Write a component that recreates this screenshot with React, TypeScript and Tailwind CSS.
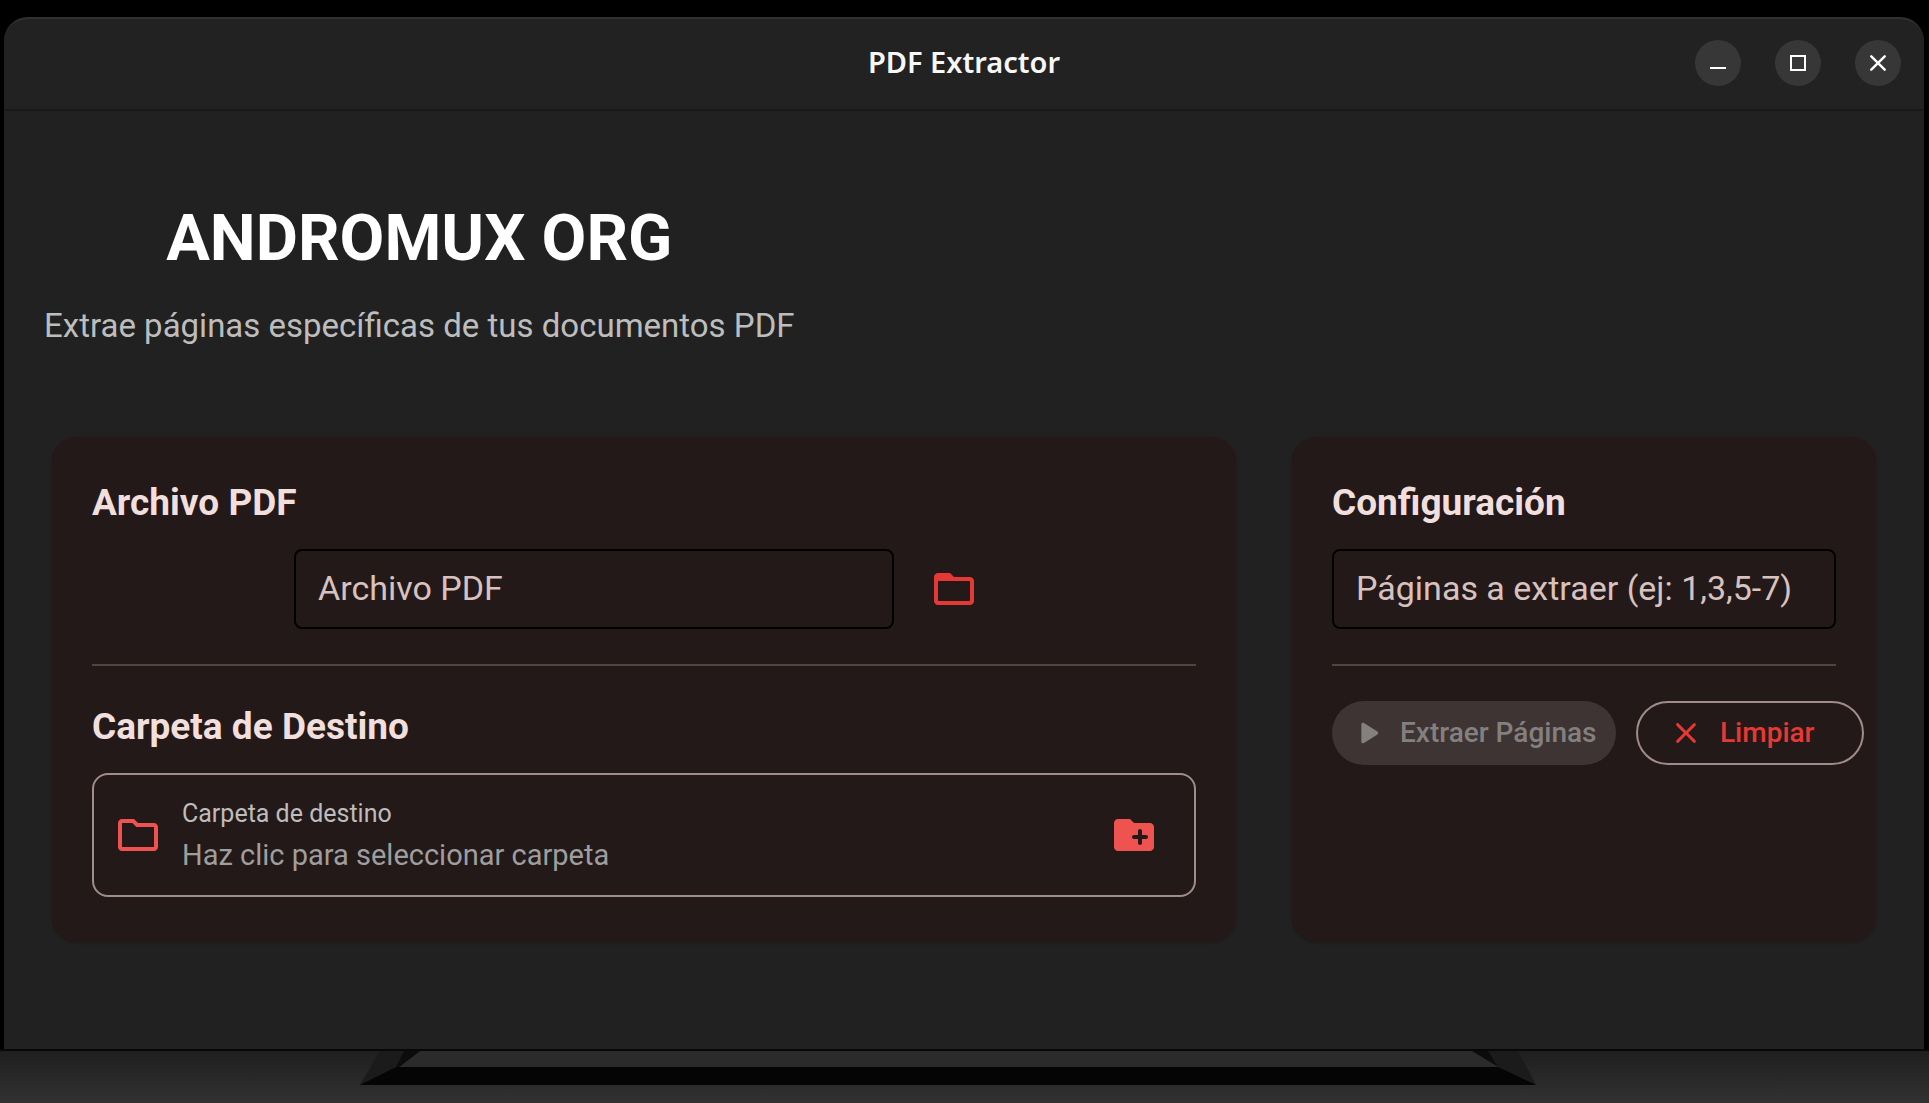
import React, { useState } from 'react';

const FOLDER_OPEN =
  'M20 6h-8l-2-2H4c-1.1 0-1.99.9-1.99 2L2 18c0 1.1.9 2 2 2h16c1.1 0 2-.9 2-2V8c0-1.1-.9-2-2-2zm-.5 12h-15c-.28 0-.5-.22-.5-.5v-9c0-.28.22-.5.5-.5h15c.28 0 .5.22.5.5v9c0 .28-.22.5-.5.5z';
const FOLDER_OUTLINED =
  'M9.17 6l2 2H20v10H4V6h5.17M10 4H4c-1.1 0-1.99.9-1.99 2L2 18c0 1.1.9 2 2 2h16c1.1 0 2-.9 2-2V8c0-1.1-.9-2-2-2h-8l-2-2z';
const NEW_FOLDER =
  'M20 6h-8l-2-2H4c-1.11 0-1.99.89-1.99 2L2 18c0 1.11.89 2 2 2h16c1.11 0 2-.89 2-2V8c0-1.11-.89-2-2-2zm-2 8h-2v2c0 .55-.45 1-1 1s-1-.45-1-1v-2h-2c-.55 0-1-.45-1-1s.45-1 1-1h2v-2c0-.55.45-1 1-1s1 .45 1 1v2h2c.55 0 1 .45 1 1s-.45 1-1 1z';
const PLAY =
  'M8 6.82v10.36c0 .79.87 1.27 1.54.84l8.14-5.18c.62-.39.62-1.29 0-1.69L9.54 5.98C8.87 5.55 8 6.03 8 6.82z';
const CLEAR =
  'M18.3 5.71c-.39-.39-1.02-.39-1.41 0L12 10.59 7.11 5.7c-.39-.39-1.02-.39-1.41 0-.39.39-.39 1.02 0 1.41L10.59 12 5.7 16.89c-.39.39-.39 1.02 0 1.41.39.39 1.02.39 1.41 0L12 13.41l4.89 4.89c.39.39 1.02.39 1.41 0 .39-.39.39-1.02 0-1.41L13.41 12l4.89-4.89c.38-.38.38-1.02 0-1.4z';

function Icon({ path, className }: { path: string; className: string }) {
  return (
    <svg viewBox="0 0 24 24" fill="currentColor" aria-hidden="true" className={`shrink-0 ${className}`}>
      <path d={path} />
    </svg>
  );
}

function WindowButton({ label, children }: { label: string; children: React.ReactNode }) {
  return (
    <button
      type="button"
      aria-label={label}
      className="flex size-[46px] items-center justify-center rounded-full bg-[#373737] text-white"
    >
      <svg viewBox="0 0 16 16" fill="none" stroke="currentColor" strokeWidth="2" className="size-4">
        {children}
      </svg>
    </button>
  );
}

function TitleBar() {
  return (
    <header className="grid h-[94px] grid-cols-[1fr_auto_1fr] items-center rounded-t-3xl border-t-2 border-b-2 border-t-[#313131] border-b-[#191919] bg-[#222222] px-[23px] pb-0.5">
      <span />
      <h1 className="pb-0.5 font-['Noto_Sans',sans-serif] text-[29px] leading-10 font-semibold text-[#f7f7f7]">
        PDF Extractor
      </h1>
      <div className="flex justify-end gap-[34px]">
        <WindowButton label="Minimizar">
          <path d="M0 13h16" />
        </WindowButton>
        <WindowButton label="Maximizar">
          <path d="M1 1h14v14H1z" />
        </WindowButton>
        <WindowButton label="Cerrar">
          <path d="M1.3 1.3l13.4 13.4M14.7 1.3L1.3 14.7" strokeWidth="2.4" strokeLinecap="round" />
        </WindowButton>
      </div>
    </header>
  );
}

function Card({ children }: { children: React.ReactNode }) {
  return (
    <section className="m-2 min-w-0 rounded-3xl bg-[#231918] px-10 pt-10 pb-[45px] shadow-sm">{children}</section>
  );
}

function CardTitle({ children }: { children: React.ReactNode }) {
  return <h3 className="text-[37px] leading-[52px] font-bold text-[#f1dfdd]">{children}</h3>;
}

function Divider() {
  return <hr className="my-[35px] border-t-2 border-[#534341]" />;
}

const inputClass =
  'h-20 min-w-0 rounded-lg border-2 border-black bg-transparent px-[22px] pb-0.5 text-[34px] text-[#f1dfdd] placeholder:text-[#d8c2bf] outline-none';

function Wallpaper() {
  return (
    <div className="h-[52px] overflow-hidden bg-linear-to-b from-[#1f1f1f] to-[#323232]">
      <svg viewBox="0 0 1929 52" preserveAspectRatio="none" className="h-full w-full" aria-hidden="true">
        <path d="M380 0h1138l18 34H360z" fill="#1b1b1b" />
        <path d="M404 0h1084l10 16H396z" fill="#0c0c0c" />
        <path d="M420 0h1052l28 17H398z" fill="#2b2b2b" />
        <path d="M396 16h1102l38 18H360z" fill="#050505" />
      </svg>
    </div>
  );
}

export default function App() {
  const [file, setFile] = useState('');
  const [pages, setPages] = useState('');

  return (
    <div className="flex min-h-screen flex-col bg-black pt-[17px] font-[Roboto,sans-serif]">
      <div className="mr-[5px] ml-1 flex grow flex-col">
        <TitleBar />
        <main className="grow bg-[#212121] px-10 pt-[82px] pb-20">
          <div className="flex w-fit flex-col items-center">
            <h2 className="text-[65px] leading-[90px] font-bold text-white">ANDROMUX ORG</h2>
            <p className="mt-[19px] text-[33px] leading-[48px] text-[#bdbdbd]">
              Extrae páginas específicas de tus documentos PDF
            </p>
          </div>

          <div className="mt-[79px] grid grid-cols-[2fr_1fr] gap-10">
            <Card>
              <CardTitle>Archivo PDF</CardTitle>
              <div className="mt-5 flex items-center justify-center gap-5">
                <input
                  type="text"
                  aria-label="Archivo PDF"
                  placeholder="Archivo PDF"
                  value={file}
                  onChange={(e) => setFile(e.target.value)}
                  className={`w-[600px] ${inputClass}`}
                />
                <button type="button" aria-label="Seleccionar archivo" className="p-4 text-[#e53935]">
                  <Icon path={FOLDER_OPEN} className="size-12" />
                </button>
              </div>
              <Divider />
              <CardTitle>Carpeta de Destino</CardTitle>
              <button
                type="button"
                className="mt-5 flex h-[124px] w-full items-center gap-5 rounded-2xl border-2 border-[#a08c8a] pr-9 pl-5 text-left"
              >
                <Icon path={FOLDER_OUTLINED} className="size-12 text-[#ef5350]" />
                <span className="flex grow flex-col pt-1">
                  <span className="text-[25px] leading-9 text-[#bdbdbd]">Carpeta de destino</span>
                  <span className="text-[29px] leading-[46px] text-[#9e9e9e]">Haz clic para seleccionar carpeta</span>
                </span>
                <Icon path={NEW_FOLDER} className="size-12 text-[#ef5350]" />
              </button>
            </Card>

            <Card>
              <CardTitle>Configuración</CardTitle>
              <input
                type="text"
                aria-label="Páginas a extraer"
                placeholder="Páginas a extraer (ej: 1,3,5-7)"
                value={pages}
                onChange={(e) => setPages(e.target.value)}
                className={`mt-5 w-full ${inputClass}`}
              />
              <Divider />
              <div className="-mr-8 flex gap-5">
                <button
                  type="button"
                  disabled
                  className="flex h-16 w-[284px] shrink-0 items-center gap-3 rounded-full bg-[#3e3433] pl-4 text-[28px] font-medium whitespace-nowrap text-[#848080]"
                >
                  <Icon path={PLAY} className="size-10" />
                  Extraer Páginas
                </button>
                <button
                  type="button"
                  className="flex h-16 w-[228px] shrink-0 items-center gap-4 rounded-full border-2 border-[#a08c8a] pl-[30px] text-[28px] font-medium whitespace-nowrap text-[#e53935]"
                >
                  <Icon path={CLEAR} className="size-9" />
                  Limpiar
                </button>
              </div>
            </Card>
          </div>
        </main>
      </div>
      <div className="border-t-2 border-[#080808]">
        <Wallpaper />
      </div>
    </div>
  );
}
